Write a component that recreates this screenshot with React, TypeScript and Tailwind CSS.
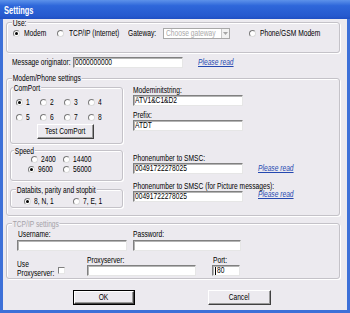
import React from "react";

function T({ children, className = "" }: { children: React.ReactNode; className?: string }) {
  return (
    <span className={"inline-block whitespace-nowrap origin-left scale-x-[0.74] leading-[9px] " + className}>
      {children}
    </span>
  );
}

function Radio({ checked = false }: { checked?: boolean }) {
  return (
    <span className="w-[7px] h-[7px] shrink-0 rounded-full bg-white border border-t-[#7a7a7a] border-l-[#7a7a7a] border-r-[#dcdcdc] border-b-[#dcdcdc] flex items-center justify-center">
      {checked && <span className="w-[3px] h-[3px] rounded-full bg-black" />}
    </span>
  );
}

function Group({
  label,
  className = "",
  labelClass = "left-[4px] -top-[4px]",
  disabled = false,
  children,
}: {
  label: string;
  className?: string;
  labelClass?: string;
  disabled?: boolean;
  children?: React.ReactNode;
}) {
  return (
    <div className={"relative shrink-0 border border-[#c4c2c8] rounded-[3px] shadow-[inset_1px_1px_0_#fff,1px_1px_0_#fff] " + className}>
      <span className={"absolute h-[8px] leading-[8px] " + labelClass}>
        <span
          className={
            "inline-block whitespace-nowrap origin-left scale-x-[0.74] leading-[8px] bg-[#ECEAEF] px-[1px] " +
            (disabled ? "text-[#a4a2a8]" : "text-black")
          }
        >
          {label}
        </span>
      </span>
      {children}
    </div>
  );
}

function Input({ w, value = "", caret = false }: { w: string; value?: string; caret?: boolean }) {
  return (
    <div
      className={
        "h-[11px] shrink-0 bg-white border border-t-[#808080] border-l-[#808080] border-r-[#e6e6e6] border-b-[#e6e6e6] shadow-[inset_1px_1px_0_#b4b4b4] flex items-center pl-[1px] overflow-hidden " +
        w
      }
    >
      {caret && <span className="w-px h-[8px] bg-black mr-[1px] ml-[1px] shrink-0" />}
      <T>{value}</T>
    </div>
  );
}

function Link() {
  return <T className="italic underline text-[#2448b0]">Please read</T>;
}

function Btn({ label, w, def = false }: { label: string; w: string; def?: boolean }) {
  const inner = (
    <div className="flex-1 h-full border border-t-white border-l-white border-r-[#404040] border-b-[#404040] shadow-[inset_-1px_-1px_0_#9a9a9a] bg-[#ECEAEF] flex items-center justify-center">
      <span className="inline-block whitespace-nowrap origin-center scale-x-[0.74] leading-[9px]">{label}</span>
    </div>
  );
  return def ? (
    <div className={"h-[15px] shrink-0 border border-black flex " + w}>{inner}</div>
  ) : (
    <div className={"h-[15px] shrink-0 flex " + w}>{inner}</div>
  );
}

function RItem({ label, checked = false, w }: { label: string; checked?: boolean; w: string }) {
  return (
    <div className={"flex items-center gap-[3px] shrink-0 " + w}>
      <Radio checked={checked} />
      <T>{label}</T>
    </div>
  );
}

export default function App() {
  return (
    <div className="w-[350px] h-[313px] bg-[#3d70d8] flex flex-col overflow-hidden font-['Liberation_Sans',Arial,sans-serif] text-[9px] leading-[9px] text-black">
      {/* Title bar */}
      <div className="h-[19px] shrink-0 bg-[linear-gradient(#5d92ea,#2e67da_30%,#2659ce_85%,#1f4fc2)] flex items-center pl-[4px] pt-[1px]">
        <span className="inline-block origin-left scale-x-[0.68] text-white font-bold text-[11px] leading-[11px] whitespace-nowrap">
          Settings
        </span>
      </div>

      {/* Body */}
      <div className="flex-1 mx-[3px] mb-[3px] bg-[#ECEAEF] flex flex-col">
        {/* Use */}
        <Group label="Use:" className="ml-[3px] mt-[3px] w-[334px] h-[31px]" labelClass="left-[5px] -top-[4px]">
          <div className="flex items-center h-[12px] mt-[4px]">
            <div className="flex items-center gap-[4px] ml-[6px] w-[44px] shrink-0">
              <Radio checked />
              <T>Modem</T>
            </div>
            <div className="flex items-center gap-[5px] w-[71px] shrink-0">
              <Radio />
              <T>TCP/IP (Internet)</T>
            </div>
            <div className="w-[35px] shrink-0">
              <T>Gateway:</T>
            </div>
            <div className="w-[67px] h-[11px] shrink-0 bg-white border border-[#a8a8a8] flex items-center pl-[2px]">
              <div className="flex-1 min-w-0">
                <T className="text-[#a9a9a9]">Choose gateway</T>
              </div>
              <span className="w-[8px] h-[9px] shrink-0 bg-[#f2f2f2] border-l border-[#c8c8c8] flex items-center justify-center">
                <svg width="5" height="3" viewBox="0 0 5 3">
                  <path d="M0 0h5L2.5 3z" fill="#a6a6a6" />
                </svg>
              </span>
            </div>
            <div className="flex items-center gap-[4px] ml-[19px] shrink-0">
              <Radio />
              <T>Phone/GSM Modem</T>
            </div>
          </div>
        </Group>

        {/* Message originator */}
        <div className="flex items-center h-[11px] mt-[4px] shrink-0">
          <div className="w-[61px] ml-[9px] shrink-0">
            <T>Message originator:</T>
          </div>
          <Input w="w-[110px]" value="0000000000" />
          <div className="ml-[15px]">
            <Link />
          </div>
        </div>

        {/* Modem/Phone settings */}
        <Group label="Modem/Phone settings" className="ml-[3px] mt-[10px] w-[334px] h-[138px]" labelClass="left-[5px] -top-[5px]">
          <div className="flex">
            {/* Left column */}
            <div className="flex flex-col ml-[3px] w-[113px] shrink-0">
              <Group label="ComPort" className="mt-[8px] w-[113px] h-[57px]" labelClass="left-[2px] -top-[4px]">
                <div className="flex ml-[5px] mt-[8px] h-[12px] items-center">
                  <RItem label="1" checked w="w-[24px]" />
                  <RItem label="2" w="w-[24px]" />
                  <RItem label="3" w="w-[24px]" />
                  <RItem label="4" w="w-[24px]" />
                </div>
                <div className="flex ml-[5px] mt-[3px] h-[12px] items-center">
                  <RItem label="5" w="w-[24px]" />
                  <RItem label="6" w="w-[24px]" />
                  <RItem label="7" w="w-[24px]" />
                  <RItem label="8" w="w-[24px]" />
                </div>
                <div className="flex mt-[1px] ml-[26px]">
                  <Btn label="Test ComPort" w="w-[56px] h-[11px]" />
                </div>
              </Group>

              <Group label="Speed" className="mt-[6px] w-[113px] h-[31px]" labelClass="left-[3px] -top-[4px]">
                <div className="flex ml-[20px] mt-[3px] h-[10px] items-center">
                  <RItem label="2400" w="w-[32px]" />
                  <RItem label="14400" w="w-[40px]" />
                </div>
                <div className="flex ml-[17px] h-[10px] items-center">
                  <RItem label="9600" checked w="w-[35px]" />
                  <RItem label="56000" w="w-[40px]" />
                </div>
              </Group>

              <Group label="Databits, parity and stopbit" className="mt-[8px] w-[113px] h-[19px]" labelClass="left-[5px] -top-[4px]">
                <div className="flex ml-[13px] mt-[6px] h-[10px] items-center">
                  <RItem label="8, N, 1" checked w="w-[49px]" />
                  <RItem label="7, E, 1" w="w-[40px]" />
                </div>
              </Group>
            </div>

            {/* Right column */}
            <div className="flex flex-col ml-[10px]">
              <div className="mt-[7px] h-[9px]">
                <T>Modeminitstring:</T>
              </div>
              <Input w="w-[110px]" value="ATV1&C1&D2" />
              <div className="mt-[5px] h-[9px]">
                <T>Prefix:</T>
              </div>
              <Input w="w-[110px]" value="ATDT" />
              <div className="mt-[23px] h-[9px]">
                <T>Phonenumber to SMSC:</T>
              </div>
              <div className="flex items-center">
                <Input w="w-[110px]" value="00491722278025" />
                <div className="ml-[15px]">
                  <Link />
                </div>
              </div>
              <div className="mt-[8px] h-[9px]">
                <T>Phonenumber to SMSC (for Picture messages):</T>
              </div>
              <div className="flex items-start">
                <Input w="w-[110px]" value="00491722278025" />
                <div className="ml-[15px] -mt-[1px]">
                  <Link />
                </div>
              </div>
            </div>
          </div>
        </Group>

        {/* TCP/IP settings */}
        <Group label="TCP/IP settings" disabled className="ml-[3px] mt-[7px] w-[334px] h-[56px]" labelClass="left-[5px] -top-[4px]">
          <div className="flex mt-[6px] h-[9px]">
            <div className="ml-[11px] w-[115px] shrink-0">
              <T>Username:</T>
            </div>
            <T>Password:</T>
          </div>
          <div className="flex mt-[1px]">
            <div className="ml-[10px]">
              <Input w="w-[110px]" />
            </div>
            <div className="ml-[6px]">
              <Input w="w-[108px]" />
            </div>
          </div>
          <div className="flex items-start mt-[5px]">
            <div className="ml-[10px] w-[41px] shrink-0 flex flex-col pt-[4px]">
              <div className="h-[9px]">
                <T>Use</T>
              </div>
              <div className="h-[9px]">
                <T>Proxyserver:</T>
              </div>
            </div>
            <span className="w-[7px] h-[7px] mt-[11px] shrink-0 bg-white border border-t-[#808080] border-l-[#808080] border-r-[#e6e6e6] border-b-[#e6e6e6]" />
            <div className="ml-[22px] flex flex-col">
              <div className="h-[9px]">
                <T>Proxyserver:</T>
              </div>
              <Input w="w-[109px]" />
            </div>
            <div className="ml-[16px] flex flex-col">
              <div className="h-[9px] pl-[1px]">
                <T>Port:</T>
              </div>
              <Input w="w-[28px]" value="80" caret />
            </div>
          </div>
        </Group>

        {/* Buttons */}
        <div className="flex mt-[11px]">
          <div className="ml-[70px]">
            <Btn label="OK" w="w-[62px]" def />
          </div>
          <div className="ml-[73px]">
            <Btn label="Cancel" w="w-[63px]" />
          </div>
        </div>
      </div>
    </div>
  );
}
